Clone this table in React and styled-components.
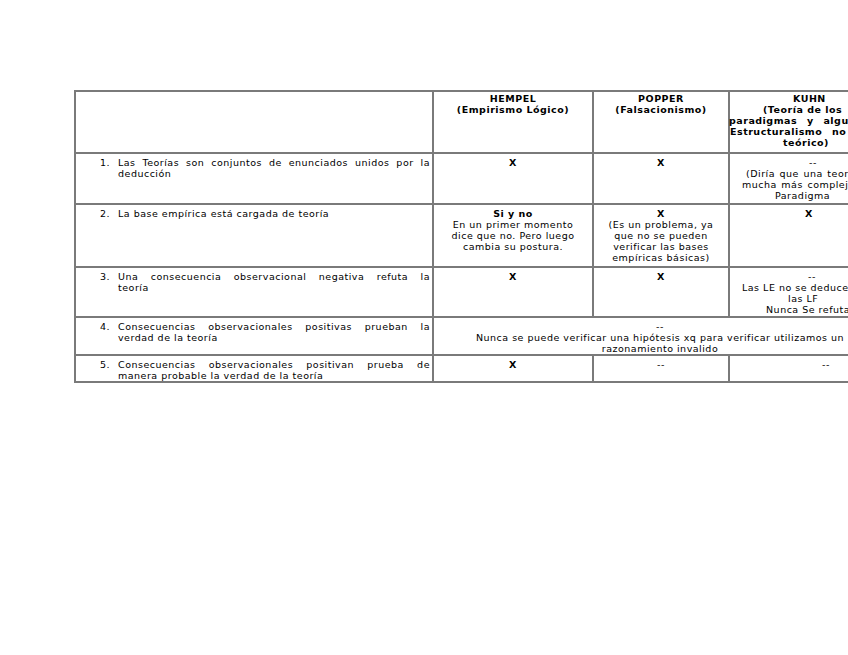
import React from "react";
import styled, { createGlobalStyle } from "styled-components";

const GlobalStyle = createGlobalStyle`
  html, body {
    margin: 0;
    padding: 0;
    background: #ffffff;
  }
  body {
    font-family: "DejaVu Sans", "Liberation Sans", sans-serif;
    color: #000;
  }
`;

const Page = styled.div`
  width: 848px;
  height: 655px;
  overflow: hidden;
  background: #fff;
  padding: 90px 0 0 74px;
  box-sizing: border-box;
`;

const Table = styled.table`
  border-collapse: collapse;
  table-layout: fixed;
  width: 812px;
  font-size: 9.5px;
  letter-spacing: 0.5px;
  line-height: 11px;
`;

const Row = styled.tr`
  height: ${(p) => p.$h}px;
`;

const Cell = styled.td`
  border: 2px solid #7a7a7a;
  vertical-align: top;
  padding: ${(p) => (p.$head ? "1px" : "3px")} ${(p) => p.$side ?? 3}px 0
    ${(p) => p.$side ?? 3}px;
  text-align: ${(p) => p.$align || "center"};
  font-weight: ${(p) => (p.$bold ? "bold" : "normal")};
  white-space: ${(p) => (p.$nowrap ? "nowrap" : "normal")};
  overflow: visible;
`;

const Item = styled.div`
  display: flex;
  align-items: flex-start;
`;

const Num = styled.span`
  flex: 0 0 32px;
  text-align: right;
`;

const ItemText = styled.div`
  flex: 1;
  margin-left: 8px;
  margin-right: 0;
`;

const JLine = styled.div`
  text-align: ${(p) => (p.$last ? "left" : "justify")};
  text-align-last: ${(p) => (p.$last ? "left" : "justify")};
  white-space: nowrap;
`;

const Line = styled.div`
  white-space: nowrap;
  font-weight: ${(p) => (p.$bold ? "bold" : "inherit")};
  margin-left: ${(p) => p.$x || 0}px;
  word-spacing: ${(p) => p.$ws || 0}px;
`;

const Strong = styled.div`
  font-weight: bold;
`;

const ListCell = ({ n, lines }) => (
  <Cell $align="left" $side={2}>
    <Item>
      <Num>{n}.</Num>
      <ItemText>
        {lines.map((l, i) => (
          <JLine key={i} $last={i === lines.length - 1}>
            {l}
          </JLine>
        ))}
      </ItemText>
    </Item>
  </Cell>
);

export default function App() {
  return (
    <>
      <GlobalStyle />
      <Page>
        <Table>
          <colgroup>
            <col style={{ width: 358 }} />
            <col style={{ width: 160 }} />
            <col style={{ width: 136 }} />
            <col style={{ width: 158 }} />
          </colgroup>
          <tbody>
            <Row $h={62}>
              <Cell $head />
              <Cell $head $bold>
                HEMPEL
                <br />
                (Empirismo Lógico)
              </Cell>
              <Cell $head $bold>
                POPPER
                <br />
                (Falsacionismo)
              </Cell>
              <Cell $head $bold $align="left" $side={1}>
                <Line $x={62}>KUHN</Line>
                <Line $x={32}>(Teoría de los</Line>
                <Line $x={-2} $ws={6}>paradigmas y algunos del</Line>
                <Line $x={-1} $ws={6}>Estructuralismo no</Line>
                <Line $x={52}>teórico)</Line>
              </Cell>
            </Row>
            <Row $h={51}>
              <ListCell
                n={1}
                lines={[
                  "Las Teorías son conjuntos de enunciados unidos por la",
                  "deducción",
                ]}
              />
              <Cell $bold>X</Cell>
              <Cell $bold>X</Cell>
              <Cell $align="left" $side={1}>
                <Line $x={78}>--</Line>
                <Line $x={15} $ws={1}>(Diría que una teoría es</Line>
                <Line $x={11} $ws={1}>mucha más compleja, un</Line>
                <Line $x={44}>Paradigma</Line>
              </Cell>
            </Row>
            <Row $h={63}>
              <ListCell n={2} lines={["La base empírica está cargada de teoría"]} />
              <Cell>
                <Strong>Si y no</Strong>
                En un primer momento
                <br />
                dice que no. Pero luego
                <br />
                cambia su postura.
              </Cell>
              <Cell>
                <Strong>X</Strong>
                (Es un problema, ya
                <br />
                que no se pueden
                <br />
                verificar las bases
                <br />
                empíricas básicas)
              </Cell>
              <Cell $align="left" $side={1}>
                <Line $bold $x={74}>X</Line>
              </Cell>
            </Row>
            <Row $h={50}>
              <ListCell
                n={3}
                lines={[
                  "Una consecuencia observacional negativa refuta la",
                  "teoría",
                ]}
              />
              <Cell $bold>X</Cell>
              <Cell $bold>X</Cell>
              <Cell $align="left" $side={1}>
                <Line $x={77}>--</Line>
                <Line $x={11}>Las LE no se deducen de</Line>
                <Line $x={57}>las LF</Line>
                <Line $x={35}>Nunca Se refutan</Line>
              </Cell>
            </Row>
            <Row $h={38}>
              <ListCell
                n={4}
                lines={[
                  "Consecuencias observacionales positivas prueban la",
                  "verdad de la teoría",
                ]}
              />
              <Cell colSpan={3} $nowrap>
                --
                <br />
                Nunca se puede verificar una hipótesis xq para verificar
                utilizamos un
                <br />
                razonamiento invalido
              </Cell>
            </Row>
            <Row $h={26}>
              <ListCell
                n={5}
                lines={[
                  "Consecuencias observacionales positivan prueba de",
                  "manera probable la verdad de la teoría",
                ]}
              />
              <Cell $bold>X</Cell>
              <Cell>--</Cell>
              <Cell $align="left" $side={1}>
                <Line $x={91}>--</Line>
              </Cell>
            </Row>
          </tbody>
        </Table>
      </Page>
    </>
  );
}
